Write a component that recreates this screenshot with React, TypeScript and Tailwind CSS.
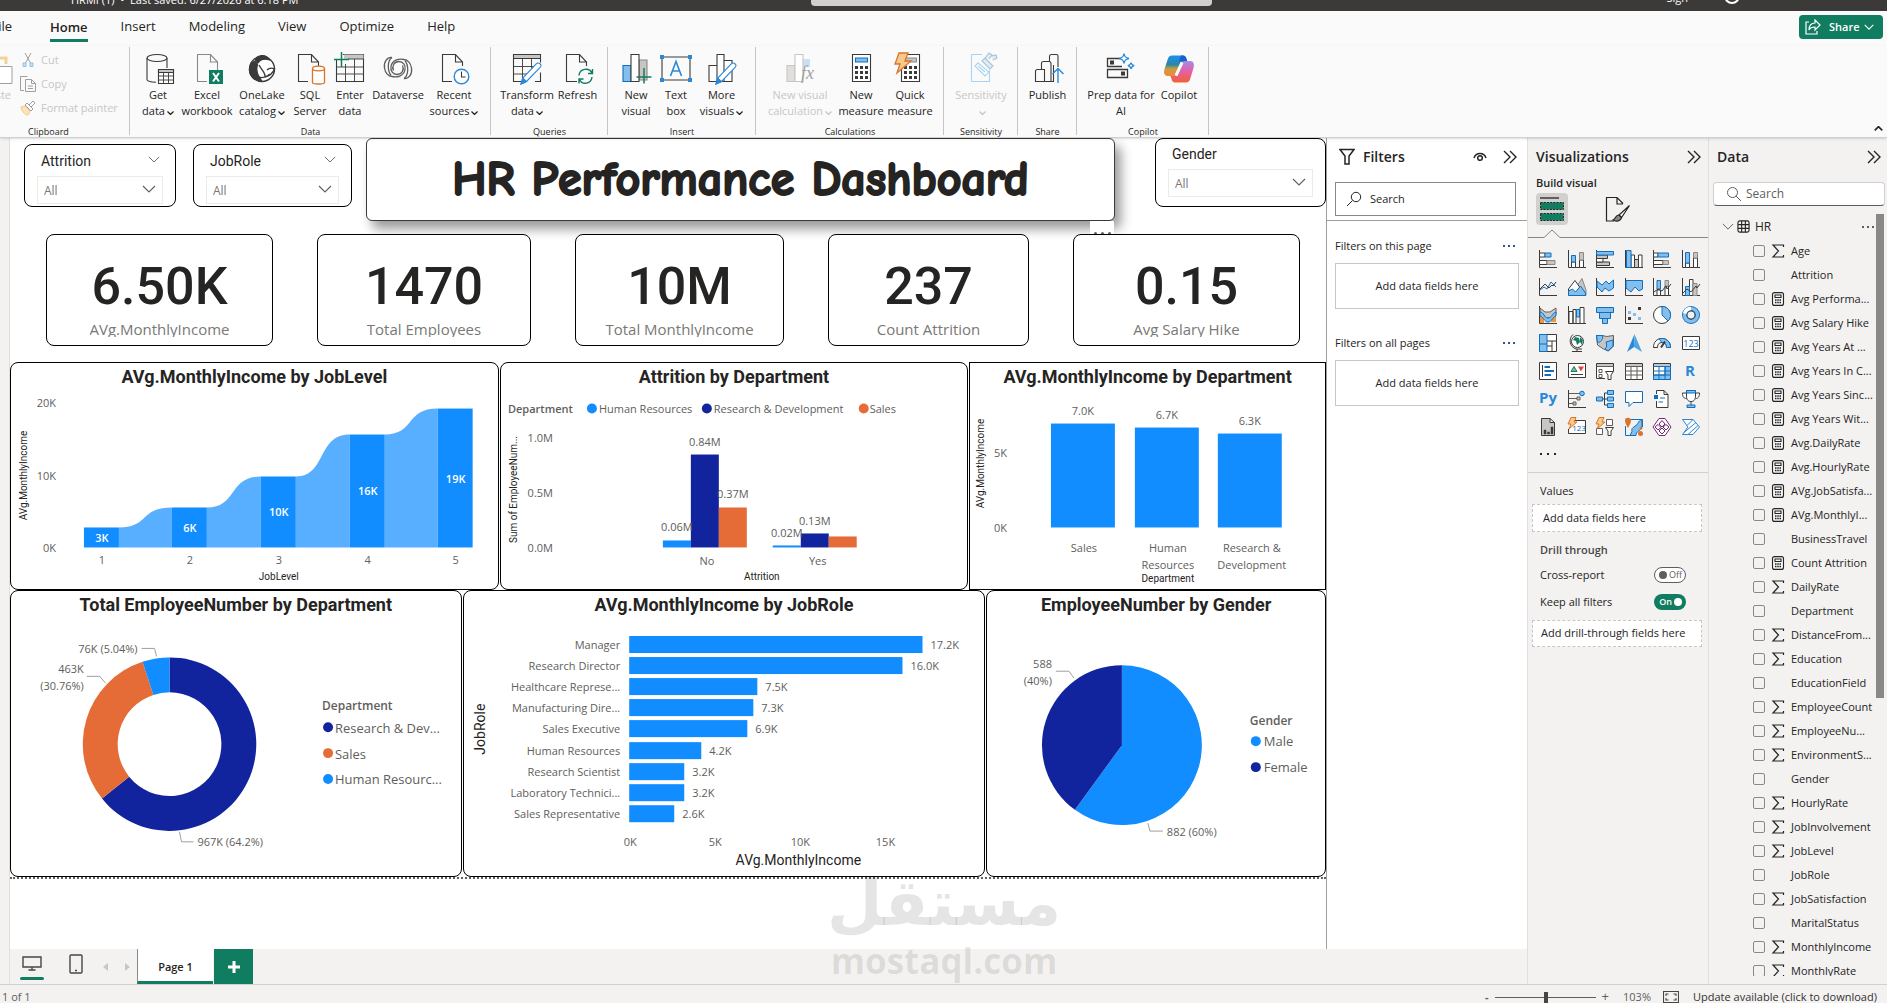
import React from "react";

const K = "#3b3a39";
const B = "#106ebe";
const L = "#83beec";
const G = "#c8c6c4";
const O = "#d9742b";

type Kids = { children?: React.ReactNode };

const Chev = ({ className = "", w = 1.1 }: { className?: string; w?: number }) => (
  <svg viewBox="0 0 14 8" className={`shrink-0 ${className}`} fill="none" stroke="currentColor" strokeWidth={w}>
    <path d="M1 1l6 6 6-6" />
  </svg>
);

const DoubleChev = () => (
  <svg viewBox="0 0 14 14" className="h-3.5 w-3.5 shrink-0 text-[#252423]" fill="none" stroke="currentColor" strokeWidth="1.400">
    <path d="M1 1l6 6-6 6M7 1l6 6-6 6" />
  </svg>
);

/* ---------- ribbon icons, 32 x 32 ---------- */

function Big({ children }: Kids) {
  return (
    <svg viewBox="0 0 32 32" className="block h-8 w-8 shrink-0 overflow-visible" fill="none" stroke={K} strokeWidth="1.1">
      {children}
    </svg>
  );
}

const Page = ({ c = K }: { c?: string }) => (
  <path d="M14 28.500H4.500V1.500h13l7 7.500v4M17.500 1.500V9h7" stroke={c} />
);

const Pencil = () => (
  <g>
    <path d="M28.500 10.500c1.500 1.300 2.200 2 .6 3.800L15.500 28.500l-5.500 2.500 1.800-6L25 11.200c1.200-1.300 2.200-1.800 3.500-.7z" fill="#fff" stroke="#2b88d8" />
    <path d="M10 31l1.800-6 3.700 3.500z" fill="#2b88d8" stroke="#2b88d8" />
  </g>
);

const Calc = ({ top = "#83beec", edge = B }: { top?: string; edge?: string }) => (
  <g>
    <path d="M7.500 1.500h18v27h-18z" fill="#fff" />
    <path d="M10.500 5h12v4h-12z" fill={top} stroke={edge} />
    <path d="M10 13h3v3h-3zM15 13h3v3h-3zM20 13h3v3h-3zM10 18h3v3h-3zM15 18h3v3h-3zM20 18h3v3h-3zM10 23h3v3h-3zM15 23h3v3h-3zM20 23h3v3h-3z" fill={K} stroke="none" />
  </g>
);

const icons: Record<string, React.ReactNode> = {
  getdata: (
    <Big>
      <ellipse cx="15" cy="5" rx="10" ry="3.500" />
      <path d="M5 5v21.500c0 1.500 3 2.500 9 2.700M25 5v10" />
      <path d="M16.500 16.500h15v14h-15z" fill="#fff" />
      <path d="M16.500 16.500h15v3h-15z" fill={G} />
      <path d="M16.500 23h15M16.500 27h15M21.500 19.500v11M26.500 19.500v11" strokeWidth="0.900" />
    </Big>
  ),
  excel: (
    <Big>
      <path d="M16 28.500H6.500V1.500h13l7 7.500v8M19.500 1.500V9h7" stroke="#8a8886" />
      <path d="M18 17h14v14H18z" fill="#107c60" stroke="none" />
      <path d="M22 20l6 8.500M28 20l-6 8.500" stroke="#fff" strokeWidth="2" />
    </Big>
  ),
  onelake: (
    <Big>
      <circle cx="16" cy="16" r="12.500" strokeWidth="1.400" fill="#fff" />
      <path d="M9 8C10 2 20 0 23.500 7c-5-1.500-9-.5-11.500 3-1.500-1.500-2.500-1.700-3-2z" fill={K} />
      <path d="M8 8.500c1.500 0 3 1.500 3.500 3-1 4-1 9 2 13 1 1.200 1.500 2 2 3C8 28.500 2.500 22 3.500 15.500 4 12 6 9.500 8 8.500z" fill={K} />
      <path d="M13 12c2.500 5 6.500 7.500 6 12M19 24c4-1 8-4 9.500-8-3-1.500-5.500-1-7.500 1M13 24c3 1.500 8 0 11-3" strokeWidth="1.400" />
    </Big>
  ),
  sql: (
    <Big>
      <Page />
      <path d="M18.500 16v13.500c0 1 3 1.500 6 1.500s6-.5 6-1.500V16z" fill="#fff" stroke={O} strokeWidth="1.300" />
      <ellipse cx="24.500" cy="15.500" rx="6" ry="2.300" fill="#fff" stroke={O} strokeWidth="1.300" />
    </Big>
  ),
  enter: (
    <Big>
      <path d="M2.500 6v22.500h27V1.500H9" />
      <path d="M10 1.500h19.500v4.500H10z" fill={G} stroke="none" />
      <path d="M2.500 14h27M2.500 21h27M11.500 11v17.500M20.500 6v22.500M14 6h15.500" strokeWidth="0.900" />
      <path d="M7.500-1v15M0 6.500h15" stroke="#107c60" strokeWidth="1.500" />
    </Big>
  ),
  dataverse: (
    <Big>
      <g strokeWidth="1.300" stroke="#605e5c">
        <path d="M10 4.500C5 4 1.500 9 2.500 15c.7 5 4 8.500 7.500 8.500 5.500 1.500 12-1 13-7 .8-4.500-2-8-6-8-5 0-7.500 5-5.500 9" />
        <path d="M10 4.500C5.500 7.500 5 17 9 22.500" />
        <path d="M22 25.500c5 .5 8.500-4.500 7.500-10.500-.7-5-4-8.500-7.500-8.500-5.500-1.500-12 1-13 7-.8 4.500 2 8 6 8 5 0 7.500-5 5.500-9" />
        <path d="M22 25.500c4.500-3 5-12.500 1-18" />
      </g>
    </Big>
  ),
  recent: (
    <Big>
      <Page />
      <circle cx="23.500" cy="23.500" r="7.300" fill="#fff" stroke="#2b88d8" strokeWidth="1.400" />
      <path d="M23.500 18.500v5.500h4" />
    </Big>
  ),
  transform: (
    <Big>
      <path d="M16 28.500H2.500V1.500h27v8M2.500 5.500h27M24 28.500h5.500v-9" />
      <path d="M3 2h26v3H3z" fill={G} stroke="none" />
      <path d="M2.500 13.500h22M2.500 21h14M11.500 5.500v23M20.500 5.500V15" strokeWidth="0.900" />
      <Pencil />
    </Big>
  ),
  refresh: (
    <Big>
      <path d="M15 28.500H4.500V1.500h13l7 7.500v4M17.500 1.500V9h7" />
      <path d="M17 22.500c.5-7 10-8.500 13-2.500M30.500 16v4.500H26M30 24c-.8 7-9.500 8.500-12.500 2.500M17 30.500V26h4.500" stroke="#107c60" strokeWidth="1.400" />
    </Big>
  ),
  newvisual: (
    <Big>
      <path d="M3 12.500h8v16H3z" fill="#83beec" stroke={B} />
      <path d="M19 7h8v20h-8z" fill={G} stroke="#8a8886" />
      <path d="M11 1.500h8v27h-8z" fill="#fff" />
      <path d="M24 15v15.500M16.500 24h15" stroke="#107c60" strokeWidth="1.500" />
    </Big>
  ),
  textbox: (
    <Big>
      <path d="M2 4h28v23H2z" />
      <path d="M0 2h4v4H0zM28 2h4v4h-4zM0 25h4v4H0zM28 25h4v4h-4z" fill="#2b88d8" stroke="none" />
      <path d="M10.500 23L16 8.500 21.500 23M12.500 18h7" stroke="#2b88d8" strokeWidth="1.600" />
    </Big>
  ),
  morevisuals: (
    <Big>
      <path d="M3 12.500h8v16H3zM11 1.500h7v27h-7zM18 7.500h8v21h-8z" fill="#fff" />
      <Pencil />
    </Big>
  ),
  viscalc: (
    <Big>
      <path d="M3 12.500h8v16H3z" fill="#e1dfdd" stroke={G} />
      <path d="M18 6h8v8h-8z" fill="#c7e0f4" stroke="none" />
      <path d="M11 1.500h8v27h-8z" fill="#fff" stroke={G} />
      <text x="17" y="26" fontFamily="Liberation Serif" fontStyle="italic" fontSize="18" fill="#a19f9d" stroke="none">fx</text>
    </Big>
  ),
  measure: (
    <Big>
      <Calc />
    </Big>
  ),
  quick: (
    <Big>
      <Calc top={G} edge="#8a8886" />
      <path d="M5 0h9l-3 8h6L3 20l3-9H1z" fill="#f8c98b" stroke={O} strokeWidth="1.300" />
    </Big>
  ),
  sensitivity: (
    <Big>
      <path d="M17 1.500H6.500v27h18V17" stroke="#a9d3f2" />
      <path d="M10 13l3-3 11 9-4 4z M13 13l7 6" stroke="#a9d3f2" fill="#fff" />
      <path d="M20 5l4-5 3 2-3 4M26 3l5-1 1 3-4 2M20 5l8 8-3 3-8-8z" stroke="#a9c3d8" fill="#dcecf8" />
    </Big>
  ),
  publish: (
    <Big>
      <path d="M3.500 28.500V18.500c0-1.500.5-2 2-2h7v12h-9zM12.500 28.500h9V12M9.500 16.500v-6c0-1.500.5-2 2-2h6M17.500 8.500v-5c0-1.500 1-2 2-2h5c1 0 1.500.5 1.500 1.500V14" />
      <path d="M17 8.500c1.500 0 2 .5 2 2V28" />
      <path d="M26 30V15.500M20.500 21l5.500-5.500 5.500 5.500" stroke="#2b88d8" strokeWidth="1.400" />
    </Big>
  ),
  prep: (
    <Big>
      <path d="M17 13.500H2.500v-8H15M2.500 16.500h20v8h-20z" strokeWidth="1.300" />
      <path d="M5 7.500h4v4H5zM16 18.500h4v4h-4z" fill={K} stroke="none" />
      <path d="M19 .500c.6 3.400 1.600 4.400 5 5-3.400.6-4.400 1.600-5 5-.6-3.400-1.600-4.400-5-5 3.400-.6 4.400-1.600 5-5z" stroke="#2b88d8" fill="#fff" strokeWidth="1.300" />
      <path d="M26 9.500c.4 2.100 1.100 2.800 3.200 3.200-2.100.4-2.800 1.100-3.200 3.200-.4-2.100-1.100-2.800-3.200-3.200 2.100-.4 2.800-1.100 3.200-3.200z" stroke="#2b88d8" fill="#fff" strokeWidth="1.300" />
    </Big>
  ),
  copilot: (
    <svg viewBox="0 0 32 32" className="block h-8 w-8 shrink-0">
      <defs>
        <linearGradient id="cpa" x1="0" y1="0" x2="0" y2="1">
          <stop offset="0" stopColor="#1d8fee" />
          <stop offset="0.450" stopColor="#2a87a8" />
          <stop offset="0.650" stopColor="#c99f3a" />
          <stop offset="1" stopColor="#f0883e" />
        </linearGradient>
        <linearGradient id="cpb" x1="0" y1="0" x2="0" y2="1">
          <stop offset="0" stopColor="#a78be8" />
          <stop offset="0.500" stopColor="#e55fa5" />
          <stop offset="1" stopColor="#f0622f" />
        </linearGradient>
      </defs>
      <path d="M9 2.500h11c2 0 3 1.500 3.500 3.500l1 3h-6l-3 10c-.8 2.500-2 4-4.500 4H4.500C1 23 .5 19 1.500 16L5 5.500c.7-2 2-3 4-3z" fill="url(#cpa)" />
      <path d="M23 29.500H12c-2 0-3-1.500-3.500-3.500l-1-3H12c2 0 3-1.500 3.500-3l3-9c.8-2 2-3 4.500-3h4.500c3.500 0 4 4 3 7L27 26.500c-.7 2-2 3-4 3z" fill="url(#cpb)" />
      <path d="M19 9.500l-6 13" stroke="#fafafa" strokeWidth="3" />
      <path d="M18 2.500h2c2 0 3 1.500 3.500 3.500l.6 2H18c-1 0-2 1-2.500 2z" fill="#1a5fd0" />
    </svg>
  ),
};

type Tool = { icon: string; lines: string[]; w: string; drop?: boolean; off?: boolean };

function ToolButton({ icon, lines, w, drop, off }: Tool) {
  return (
    <button disabled={off} className={`flex shrink-0 flex-col items-center pt-[7px] text-[11px] leading-4 whitespace-nowrap ${w} ${off ? "text-[#c8c6c4]" : "text-[#252423]"}`}>
      {icons[icon]}
      <span className="mt-0.5">{lines[0]}</span>
      <span className="flex h-4 items-center">
        {lines[1]}
        {drop && <Chev w={2.6} className="mt-1 ml-0.5 h-1 w-[7px]" />}
      </span>
    </button>
  );
}

function Group({ label, w, tools, pad }: { label: string; w: string; tools: Tool[]; pad: string }) {
  return (
    <section className={`relative flex shrink-0 flex-col ${w}`}>
      <div className={`flex h-20 ${pad}`}>
        {tools.map((t) => (
          <ToolButton key={t.icon} {...t} />
        ))}
      </div>
      <div className="text-center text-[9px] leading-[11px] text-[#252423]">{label}</div>
      <span className="absolute top-px right-0 bottom-0.5 w-px bg-[#c8c6c4]" />
    </section>
  );
}

function Ribbon() {
  return (
    <div className="z-20 flex h-[92px] shrink-0 overflow-hidden border-b border-[#d2d0ce] bg-[#fafafa] shadow-sm">
      <section className="relative flex w-[130px] shrink-0 flex-col">
        <div className="flex h-20">
          <button disabled className="flex w-[13px] shrink-0 flex-col items-end overflow-hidden pt-[7px] text-[11px] leading-4 text-[#c8c6c4]">
            <svg viewBox="0 0 32 32" className="block h-8 w-8 shrink-0" fill="none">
              <path d="M12 5h13v6" stroke="#f3d19b" strokeWidth="3" />
              <path d="M12 13.500h19v17H12z" stroke="#a19f9d" fill="#fff" />
            </svg>
            <span className="mt-0.5 pr-0.5">Paste</span>
          </button>
          <div className="flex flex-col pt-0.5 pl-[7px] text-[11px] text-[#c8c6c4]">
            <button disabled className="flex h-6 items-center gap-[5px]">
              <svg viewBox="0 0 16 16" className="h-4 w-4" fill="none" stroke="#a19f9d">
                <path d="M5 1l5.500 10M11 1L5.500 11" />
                <path d="M3 11h3v3.500H3zM10 11h3v3.500h-3z" fill="#c7e0f4" stroke="#8fc3ee" />
              </svg>
              Cut
            </button>
            <button disabled className="flex h-6 items-center gap-[5px]">
              <svg viewBox="0 0 16 16" className="h-4 w-4" fill="none" stroke="#a19f9d">
                <path d="M4 14.500H.500V.500h7M5.500 3.500h6l4 4v8h-10zM11.500 3.500v4h4M8 10h5M8 12.500h5" />
              </svg>
              Copy
            </button>
            <button disabled className="flex h-6 items-center gap-[5px]">
              <svg viewBox="0 0 16 16" className="h-4 w-4" fill="none" stroke="#a19f9d">
                <path d="M1 7l4-1 5 5-2 4c-3 0-6-3-7-8z" fill="#fbe3bd" stroke="#f3c987" />
                <path d="M5 5l2-2 6 6-2 2zM9 5l4-4 2 2-4 4" fill="#fff" />
              </svg>
              Format painter
            </button>
          </div>
        </div>
        <div className="pl-7 text-[9px] leading-[11px] text-[#252423]">Clipboard</div>
        <span className="absolute top-px right-0 bottom-0.5 w-px bg-[#c8c6c4]" />
      </section>
      <Group
        label="Data"
        w="w-[361px]"
        pad="pl-[3px]"
        tools={[
          { icon: "getdata", lines: ["Get", "data"], w: "w-[50px]", drop: true },
          { icon: "excel", lines: ["Excel", "workbook"], w: "w-12" },
          { icon: "onelake", lines: ["OneLake", "catalog"], w: "w-[62px]", drop: true },
          { icon: "sql", lines: ["SQL", "Server"], w: "w-[34px]" },
          { icon: "enter", lines: ["Enter", "data"], w: "w-[46px]" },
          { icon: "dataverse", lines: ["Dataverse"], w: "w-[50px]" },
          { icon: "recent", lines: ["Recent", "sources"], w: "w-[62px]", drop: true },
        ]}
      />
      <Group
        label="Queries"
        w="w-[117px]"
        pad="pl-2"
        tools={[
          { icon: "transform", lines: ["Transform", "data"], w: "w-14", drop: true },
          { icon: "refresh", lines: ["Refresh"], w: "w-[45px]" },
        ]}
      />
      <Group
        label="Insert"
        w="w-[148px]"
        pad="pl-1.5"
        tools={[
          { icon: "newvisual", lines: ["New", "visual"], w: "w-11" },
          { icon: "textbox", lines: ["Text", "box"], w: "w-9" },
          { icon: "morevisuals", lines: ["More", "visuals"], w: "w-[55px]", drop: true },
        ]}
      />
      <Group
        label="Calculations"
        w="w-[188px]"
        pad="pl-1"
        tools={[
          { icon: "viscalc", lines: ["New visual", "calculation"], w: "w-20", drop: true, off: true },
          { icon: "measure", lines: ["New", "measure"], w: "w-[42px]" },
          { icon: "quick", lines: ["Quick", "measure"], w: "w-14" },
        ]}
      />
      <Group label="Sensitivity" w="w-[74px]" pad="justify-center" tools={[{ icon: "sensitivity", lines: ["Sensitivity", ""], w: "w-16", drop: true, off: true }]} />
      <Group label="Share" w="w-[59px]" pad="justify-center" tools={[{ icon: "publish", lines: ["Publish"], w: "w-12" }]} />
      <Group
        label="Copilot"
        w="w-[132px]"
        pad="pl-2"
        tools={[
          { icon: "prep", lines: ["Prep data for", "AI"], w: "w-[72px]" },
          { icon: "copilot", lines: ["Copilot"], w: "w-11" },
        ]}
      />
      <button aria-label="Collapse ribbon" className="mt-auto mr-1 mb-1.5 ml-auto text-[#252423]">
        <Chev w={2.6} className="h-[5px] w-[9px] rotate-180" />
      </button>
    </div>
  );
}

/* ---------- report visuals ---------- */

const DIN = "font-['Roboto',sans-serif]";

function Slicer({ title, w, top, body }: { title: string; w: string; top: string; body: string }) {
  return (
    <section className={`shrink-0 rounded-lg border border-black bg-white ${w} ${top}`}>
      <div className={body}>
        <label htmlFor={title} className={`flex h-4 items-center justify-between pl-1 text-[14px] text-[#252423] ${DIN}`}>
          {title}
          {title !== "Gender" && <Chev className="mr-[3px] mb-1 h-[7px] w-3 text-[#605e5c]" />}
        </label>
        <div className="relative mt-[7px] h-7 border border-[#edebe9]">
          <select id={title} className="h-full w-full appearance-none bg-transparent pl-1.5 text-[12px] text-[#7a7876]">
            <option>All</option>
          </select>
          <Chev className="pointer-events-none absolute top-2 right-1.5 h-2 w-3.5 text-[#605e5c]" />
        </div>
      </div>
    </section>
  );
}

function Kpi({ value, label }: { value: string; label: string }) {
  return (
    <section className="flex h-28 flex-col items-center rounded-lg border border-black bg-white pt-6 text-center">
      <div className={`h-14 text-[52px] leading-14 font-medium text-[#252423] ${DIN}`}>{value}</div>
      <div className="mt-1 h-[18px] overflow-hidden text-[15px] leading-5 text-[#7a7876]">{label}</div>
    </section>
  );
}

function Visual({ title, box, round = "rounded-lg", children }: { title: string; box: string; round?: string } & Kids) {
  return (
    <section className={`flex min-w-0 flex-col border border-black bg-white ${round}`}>
      <h2 className={`mt-0.5 h-6 shrink-0 truncate text-center text-[18px] leading-6 font-bold text-[#252423] ${DIN}`}>{title}</h2>
      <svg viewBox={box} className="block min-h-0 w-full flex-1" fontSize="11" fill="#605e5c" role="img" aria-label={title}>
        {children}
      </svg>
    </section>
  );
}

type TP = { x: number; y: number; a?: "start" | "middle" | "end"; s?: number; c?: string; b?: boolean; din?: boolean; up?: boolean } & Kids;

function T({ x, y, a = "middle", s = 11, c = "#605e5c", b, din, up, children }: TP) {
  return (
    <text
      x={x}
      y={y}
      textAnchor={a}
      dominantBaseline="central"
      fontSize={s}
      fill={c}
      fontWeight={b ? 600 : 400}
      fontFamily={din ? "Roboto, sans-serif" : undefined}
      transform={up ? `rotate(-90 ${x} ${y})` : undefined}
    >
      {children}
    </text>
  );
}

const BL = "#118dff";
const NV = "#12239e";
const OR = "#e66c37";

function RibbonChart() {
  const bars = [
    [84, 527, "3K"],
    [172, 507, "6K"],
    [261, 476, "10K"],
    [350, 434, "16K"],
    [438, 408, "19K"],
  ] as [number, number, string][];
  return (
    <Visual title="AVg.MonthlyIncome by JobLevel" box="11 389 487 199">
      {bars.slice(1).map(([x, y], i) => {
        const x0 = bars[i][0] + 35;
        const y0 = bars[i][1];
        const m = (x0 + x) / 2;
        return <path key={x} d={`M${x0} ${y0}C${m + 4} ${y0} ${m - 6} ${y} ${x} ${y}V547H${x0}z`} fill="#59afff" />;
      })}
      {bars.map(([x, y, t], i) => (
        <g key={x}>
          <rect x={x} y={y} width="35" height={547 - y} fill={BL} />
          <T x={x + 18} y={(y + 547) / 2} c="#fff" b>{t}</T>
          <T x={x + 18} y={559}>{i + 1}</T>
        </g>
      ))}
      <T x={56} y={402} a="end">20K</T>
      <T x={56} y={475} a="end">10K</T>
      <T x={56} y={547} a="end">0K</T>
      <T x={279} y={576} s={10} c="#252423" din>JobLevel</T>
      <T x={24} y={475} s={10} c="#252423" din up>AVg.MonthlyIncome</T>
    </Visual>
  );
}

function AttritionChart() {
  const bars = [
    [663, 540, BL], [691, 454, NV], [719, 507, OR],
    [773, 545, BL], [801, 533, NV], [829, 536, OR],
  ] as [number, number, string][];
  return (
    <Visual title="Attrition by Department" box="501 389 467 199">
      <T x={508} y={408} a="start" b>Department</T>
      <circle cx="592" cy="408" r="5" fill={BL} />
      <T x={599} y={408} a="start">Human Resources</T>
      <circle cx="707" cy="408" r="5" fill={NV} />
      <T x={714} y={408} a="start">Research &amp; Development</T>
      <circle cx="864" cy="408" r="5" fill={OR} />
      <T x={870} y={408} a="start">Sales</T>
      {bars.map(([x, y, c]) => (
        <rect key={x} x={x} y={y} width="28" height={547 - y} fill={c} />
      ))}
      <T x={553} y={437} a="end">1.0M</T>
      <T x={553} y={492} a="end">0.5M</T>
      <T x={553} y={547} a="end">0.0M</T>
      <T x={677} y={526}>0.06M</T>
      <T x={705} y={441}>0.84M</T>
      <T x={733} y={493}>0.37M</T>
      <T x={787} y={532}>0.02M</T>
      <T x={815} y={520}>0.13M</T>
      <T x={707} y={560}>No</T>
      <T x={818} y={560}>Yes</T>
      <T x={762} y={576} s={10} c="#252423" din>Attrition</T>
      <T x={514} y={489} s={10} c="#252423" din up>Sum of EmployeeNum...</T>
    </Visual>
  );
}

function DepartmentChart() {
  const bars = [
    [1051, 423, "7.0K"],
    [1135, 427, "6.7K"],
    [1218, 433, "6.3K"],
  ] as [number, number, string][];
  return (
    <Visual title="AVg.MonthlyIncome by Department" box="970 389 355 199" round="">
      {bars.map(([x, y, t]) => (
        <g key={x}>
          <rect x={x} y={y} width="64" height={527 - y} fill={BL} />
          <T x={x + 32} y={y - 13}>{t}</T>
        </g>
      ))}
      <T x={1007} y={452} a="end">5K</T>
      <T x={1007} y={527} a="end">0K</T>
      <T x={1084} y={547}>Sales</T>
      <T x={1168} y={547}>Human</T>
      <T x={1168} y={564}>Resources</T>
      <T x={1252} y={547}>Research &amp;</T>
      <T x={1252} y={564}>Development</T>
      <T x={1168} y={578} s={10} c="#252423" din>Department</T>
      <T x={981} y={463} s={10} c="#252423" din up>AVg.MonthlyIncome</T>
    </Visual>
  );
}

function slice(cx: number, cy: number, r: number, q: number, from: number, to: number) {
  const p = (rad: number, t: number) => `${cx + rad * Math.sin(t * 2 * Math.PI)} ${cy - rad * Math.cos(t * 2 * Math.PI)}`;
  const big = to - from > 0.5 ? 1 : 0;
  return `M${p(r, from)}A${r} ${r} 0 ${big} 1 ${p(r, to)}L${p(q, to)}A${q} ${q} 0 ${big} 0 ${p(q, from)}z`;
}

function DonutChart() {
  return (
    <Visual title="Total EmployeeNumber by Department" box="11 617 451 259">
      <path d={slice(170, 744, 87, 52, 0, 0.642)} fill={NV} />
      <path d={slice(170, 744, 87, 52, 0.642, 0.9496)} fill={OR} />
      <path d={slice(170, 744, 87, 52, 0.9496, 1)} fill={BL} />
      <path d="M142 648h13l2 8M87 676h13l6 7M180 832l2 10h12" fill="none" stroke="#a19f9d" />
      <T x={138} y={648} a="end">76K (5.04%)</T>
      <T x={84} y={668} a="end">463K</T>
      <T x={84} y={685} a="end">(30.76%)</T>
      <T x={198} y={842} a="start">967K (64.2%)</T>
      <T x={323} y={705} a="start" s={12} b>Department</T>
      <circle cx="329" cy="727" r="5" fill={NV} />
      <T x={336} y={728} a="start" s={13}>Research &amp; Dev...</T>
      <circle cx="329" cy="753" r="5" fill={OR} />
      <T x={336} y={754} a="start" s={13}>Sales</T>
      <circle cx="329" cy="779" r="5" fill={BL} />
      <T x={336} y={779} a="start" s={13}>Human Resourc...</T>
    </Visual>
  );
}

function JobRoleChart() {
  const rows = [
    ["Manager", 293, "17.2K"],
    ["Research Director", 273, "16.0K"],
    ["Healthcare Represe...", 128, "7.5K"],
    ["Manufacturing Dire...", 124, "7.3K"],
    ["Sales Executive", 118, "6.9K"],
    ["Human Resources", 72, "4.2K"],
    ["Research Scientist", 55, "3.2K"],
    ["Laboratory Technici...", 55, "3.2K"],
    ["Sales Representative", 45, "2.6K"],
  ] as [string, number, string][];
  return (
    <Visual title="AVg.MonthlyIncome by JobRole" box="464 617 520 259">
      {rows.map(([name, w, t], i) => {
        const y = 644 + Math.round(i * 21.1);
        return (
          <g key={name}>
            <T x={620} y={y} a="end">{name}</T>
            <rect x={629} y={y - 8} width={w} height="17" fill={BL} />
            <T x={637 + w} y={y} a="start">{t}</T>
          </g>
        );
      })}
      <T x={630} y={841}>0K</T>
      <T x={715} y={841}>5K</T>
      <T x={800} y={841}>10K</T>
      <T x={885} y={841}>15K</T>
      <T x={798} y={860} s={14} c="#252423" din>AVg.MonthlyIncome</T>
      <T x={480} y={729} s={14} c="#252423" din up>JobRole</T>
    </Visual>
  );
}

function GenderChart() {
  return (
    <Visual title="EmployeeNumber by Gender" box="987 617 338 259">
      <path d={slice(1122, 745, 80, 0, 0, 0.6)} fill={BL} />
      <path d={slice(1122, 745, 80, 0, 0.6, 1)} fill={NV} />
      <path d="M1056 671h13l5 7M1148 823l2 8h13" fill="none" stroke="#a19f9d" />
      <T x={1052} y={663} a="end">588</T>
      <T x={1052} y={680} a="end">(40%)</T>
      <T x={1167} y={831} a="start">882 (60%)</T>
      <T x={1250} y={720} a="start" s={12} b>Gender</T>
      <circle cx="1256" cy="741" r="5" fill={BL} />
      <T x={1264} y={741} a="start" s={13}>Male</T>
      <circle cx="1256" cy="767" r="5" fill={NV} />
      <T x={1264} y={767} a="start" s={13}>Female</T>
    </Visual>
  );
}

function Report() {
  return (
    <main className="min-w-0 flex-1 bg-white">
      <div className="border-b-2 border-dotted border-[#605e5c]">
        <div className="flex items-start">
          <Slicer title="Attrition" w="ml-3.5 w-[152px]" top="mt-1.5 h-[63px]" body="mx-3 mt-2" />
          <Slicer title="JobRole" w="ml-[17px] w-[159px]" top="mt-1.5 h-[63px]" body="mx-3 mt-2" />
          <div className="relative ml-3.5 flex h-[83px] flex-1 items-center justify-center rounded-md border border-[#3b3a39] bg-white shadow-[6px_8px_12px_rgba(0,0,0,0.400)]">
            <h1 className="text-[48px] leading-none font-bold whitespace-nowrap text-[#252423] [font-family:'Comic_Sans_MS','Comic_Neue','Open_Sans',sans-serif] [-webkit-text-stroke:2px_#252423]">HR Performance Dashboard</h1>
            <button aria-label="More options" className="absolute top-[82px] right-0 flex h-3.5 w-6 items-end justify-center gap-1 bg-white">
              <i className="h-[3px] w-[3px] rounded-full bg-[#605e5c]" />
              <i className="h-[3px] w-[3px] rounded-full bg-[#605e5c]" />
              <i className="h-[3px] w-[3px] rounded-full bg-[#605e5c]" />
            </button>
          </div>
          <Slicer title="Gender" w="ml-10 w-[171px]" top="h-[69px]" body="mr-3 ml-3 mt-[7px]" />
        </div>
        <div className="relative mt-[13px] mr-[26px] ml-9 grid grid-cols-[227fr_214fr_209fr_201fr_227fr] gap-x-11">
          <Kpi value="6.50K" label="AVg.MonthlyIncome" />
          <Kpi value="1470" label="Total Employees" />
          <Kpi value="10M" label="Total MonthlyIncome" />
          <Kpi value="237" label="Count Attrition" />
          <Kpi value="0.15" label="Avg Salary Hike" />
        </div>
        <div className="mt-4 grid h-[228px] grid-cols-[489fr_469fr_357fr] gap-x-px">
          <RibbonChart />
          <AttritionChart />
          <DepartmentChart />
        </div>
        <div className="grid h-[287px] grid-cols-[452fr_523fr_340fr] gap-x-px">
          <DonutChart />
          <JobRoleChart />
          <GenderChart />
        </div>
      </div>
    </main>
  );
}

/* ---------- side panes ---------- */

const Dots = ({ c = "text-[#605e5c]" }: { c?: string }) => (
  <svg viewBox="0 0 12 4" className={`h-1 w-3 ${c}`} fill="currentColor">
    <path d="M0 1h2v2H0zM5 1h2v2H5zM10 1h2v2h-2z" />
  </svg>
);

function PaneTitle({ children }: Kids) {
  return <h2 className="text-[14px] leading-5 font-semibold text-[#252423]">{children}</h2>;
}

function FilterWell({ label }: { label: string }) {
  return (
    <section className="mb-[25px] pl-2">
      <div className="flex h-[18px] items-center justify-between pr-3 text-[11px] text-[#252423]">
        {label}
        <button aria-label={`${label} options`}>
          <Dots c="text-[#2b579a]" />
        </button>
      </div>
      <div className="mt-2 mr-2 flex h-[46px] items-center justify-center border border-[#c8c6c4] text-[11px] text-[#252423]">Add data fields here</div>
    </section>
  );
}

function Filters() {
  return (
    <aside className="w-[201px] shrink-0 border-l border-[#a19f9d] bg-white">
      <header className="flex h-[38px] items-center pr-2.5 pl-3">
        <svg viewBox="0 0 16 18" className="h-[18px] w-4" fill="none" stroke="#252423" strokeWidth="1.500">
          <path d="M1 1.500h14L10 8v8H6V8z" />
        </svg>
        <div className="ml-2 flex-1">
          <PaneTitle>Filters</PaneTitle>
        </div>
        <svg viewBox="0 0 14 10" className="mr-4 h-2.5 w-3.5" fill="none" stroke="#252423" strokeWidth="1.500">
          <path d="M1 6C3 0 11 0 13 6" />
          <circle cx="7" cy="6" r="2.300" />
        </svg>
        <DoubleChev />
      </header>
      <div className="border-b border-[#a19f9d] pt-1.5 pb-1 pl-2">
        <div className="mr-[11px] flex h-[34px] items-center border border-[#8a8886] pl-2.5">
          <svg viewBox="0 0 16 16" className="h-4 w-4" fill="none" stroke="#252423">
            <circle cx="10" cy="6" r="4.700" />
            <path d="M6.500 9.500L1 15" />
          </svg>
          <input aria-label="Search filters" placeholder="Search" className="ml-2 w-28 bg-transparent text-[11px] outline-none placeholder:text-[#252423]" />
        </div>
      </div>
      <div className="pt-4">
        <FilterWell label="Filters on this page" />
        <FilterWell label="Filters on all pages" />
      </div>
    </aside>
  );
}

const ax = <path d="M.500 0v17.500H18" stroke={K} />;
const funnel = <path d="M9.500 9.500h8L15 13v4.500h-3V13z" fill="#fff" stroke={K} />;
const bolt = <path d="M3-.5h5L6 4h3L1 11l2-5H0z" fill="#f8c98b" stroke={O} />;

const vizIcons: [string, React.ReactNode][] = [
  ["Stacked bar chart", <g>{ax}<path d="M.500 3H6v4H.500zM.500 10.500H8v4H.500z" fill="#fff" stroke={K} /><path d="M6 3h6v4H6z" fill={L} stroke={B} /><path d="M8 10.500h8v4H8z" fill={G} stroke="#8a8886" /></g>],
  ["Stacked column chart", <g>{ax}<path d="M3.500 12h4v5.500h-4zM11.500 10h4v7.500h-4z" fill="#fff" stroke={K} /><path d="M3.500 5.500h4V12h-4z" fill={L} stroke={B} /><path d="M11.500 2.500h4V10h-4z" fill={G} stroke="#8a8886" /></g>],
  ["Clustered bar chart", <g>{ax}<path d="M.500 5h11v3.500H.500zM.500 12h13v3.500H.500z" fill={G} stroke={K} /><path d="M.500 8.500H7V12H.500z" fill="#fff" stroke={K} /><path d="M.500 1.500h17V5H.500z" fill={L} stroke={B} /></g>],
  ["Clustered column chart", <g>{ax}<path d="M6 5h3.500v12.500H6zM13.500 5H17v12.500h-3.500z" fill="#fff" stroke={K} /><path d="M9.500 9.500h4v8h-4z" fill={G} stroke={K} /><path d="M1.500.500H6v17H1.500z" fill={L} stroke={B} /></g>],
  ["100% stacked bar chart", <g>{ax}<path d="M.500 3H5v4H.500zM.500 10.500H10v4H.500z" fill="#fff" stroke={K} /><path d="M5 3h10.500v4H5z" fill={L} stroke={B} /><path d="M10 10.500h5.500v4H10z" fill={G} stroke="#8a8886" /></g>],
  ["100% stacked column chart", <g>{ax}<path d="M3.500 13h4v4.500h-4zM11.500 8h4v9.500h-4z" fill="#fff" stroke={K} /><path d="M3.500 2.500h4V13h-4z" fill={L} stroke={B} /><path d="M11.500 2.500h4V8h-4z" fill={G} stroke="#8a8886" /></g>],
  ["Line chart", <g>{ax}<path d="M1 12l4-3 3 2 4-7 5 5" stroke={B} /><path d="M1 11l5-5 4 4 3-3 1 1 3-4" stroke={K} /></g>],
  ["Area chart", <g><path d="M9 8l5-7.500L18 12v5.500H9z" fill={G} stroke="#8a8886" /><path d="M.500 11L7 2.500l6 8.500v6H.500z" fill="#fff" stroke={K} /><path d="M.500 17.500V13l4-2 3 3 5-6 5 7v2.500z" fill={L} stroke={B} /></g>],
  ["Stacked area chart", <g>{ax}<path d="M1 3l5 4 4-4 3 3 4.500-4v8L13 13l-4-3-3 4-5-5z" fill={L} stroke={B} /></g>],
  ["100% stacked area chart", <g>{ax}<path d="M1 2.500h16.500V11L14 13l-4-4-4 5-5-4z" fill={L} stroke={B} /></g>],
  ["Line and stacked column chart", <g>{ax}<path d="M4 12h3.500v5.500H4zM12 8h3.500v9.500H12z" fill="#fff" stroke={K} /><path d="M4 2.500h3.500V11H4z" fill={L} stroke={B} /><path d="M12 2.500h3.500V8H12z" fill={G} stroke="#8a8886" /><path d="M1 14l4-3 4 2 4-5 1 3 4-5" stroke={K} /></g>],
  ["Line and clustered column chart", <g>{ax}<path d="M7.500 1.500H11v16H7.500z" fill="#fff" stroke={K} /><path d="M3.500 8.500h4v9h-4z" fill={L} stroke={B} /><path d="M11 5.500h4v12h-4z" fill={G} stroke="#8a8886" /><path d="M1 15l4-4 4 3 5-6 1 2 3-4" stroke={K} /></g>],
  ["Ribbon chart", <g>{ax}<path d="M1 9l4 1v7H1zM12 12l5-4v8h-5z" fill="#f0953f" stroke="none" /><path d="M1 2l5 4h5l6-4v6l-6 4H6L1 7z" fill={G} stroke="#605e5c" /><path d="M1 6c4 0 4 6 8 6s4-5 8-6v4c-4 1-4 6-8 6S5 11 1 10z" fill={L} stroke={B} /></g>],
  ["Waterfall chart", <g>{ax}<path d="M1 5.500h4v12H1zM12 1.500h4v16h-4zM5 3.500h3v14H5z" fill="#fff" stroke={K} /><path d="M8.500 3.500h3V11h-3z" fill={L} stroke={B} /></g>],
  ["Funnel chart", <path d="M.500 1.500h17v5H.500zM3.500 6.500h11v6h-11zM6.500 12.500h5v5h-5z" fill={L} stroke={B} />],
  ["Scatter chart", <g>{ax}<path d="M13 1h3v3h-3zM3 11h3v3H3z" fill={K} stroke="none" /><path d="M3 5h3v3H3zM8 7h3v3H8zM13 11h3v3h-3z" fill={L} stroke="none" /></g>],
  ["Pie chart", <g><circle cx="9" cy="9" r="8.500" fill="#fff" stroke={K} /><path d="M9 .500V9l6 6A8.500 8.500 0 0 0 9 .500z" fill={L} stroke={B} /></g>],
  ["Donut chart", <g><circle cx="9" cy="9" r="6.500" stroke={B} strokeWidth="5" /><circle cx="9" cy="9" r="6.500" stroke={L} strokeWidth="3.200" /><path d="M2.700 7.500A6.500 6.500 0 0 1 9 2.500" stroke="#fff" strokeWidth="3.500" /><circle cx="9" cy="9" r="4" stroke={K} strokeWidth="0.800" /></g>],
  ["Treemap", <g><path d="M.500.500h17v17H.500z" fill="#fff" stroke={K} /><path d="M.500.500H8v17H.500z" fill={L} stroke={B} /><path d="M.500 10H8" stroke={B} /><path d="M8 7h9.500M13 7v10.500M8 12h5" stroke={K} /></g>],
  ["Map", <g><circle cx="9.500" cy="7.500" r="6" fill="#fff" stroke={K} /><path d="M7 3l4 1 1 4-3 3-1-4-3-1zM12 3l3 3-1 5-2-3z" fill="#107c60" stroke="none" /><path d="M5 .500C0 5 2 13 8 15h6M9 15v2.500M4 17.500h10" stroke={K} /></g>],
  ["Filled map", <g><path d="M.500 1.500h6l4 1 7-1V12l-5 5-5-2-6-4z" fill={G} stroke="#605e5c" /><path d="M.500 1.500h6c1 4-2 7-5 7zM10 8l7-2v6l-5 5-3-2c2-2 2-4 1-7z" fill={L} stroke={B} /></g>],
  ["Azure map", <g><path d="M9.500 0L2 18l7-5z" fill="#2b88d8" stroke="none" /><path d="M9.500 0L17 18l-8-5z" fill="#4ea5e6" stroke="none" /></g>],
  ["Gauge", <g><path d="M.500 13.500C.500 8 4 4.500 9 4.500s8.500 3.500 8.500 9h-4C13.500 10 12 8.500 9 8.500S4.500 10 4.500 13.500z" fill="#fff" stroke={K} /><path d="M6 5c6-2 11.500 2 11.500 8.500h-4C13.500 10 12 8.500 9 8.500z" fill={L} stroke={B} /><path d="M8 13.500l4-6" stroke={K} strokeWidth="2" /></g>],
  ["Card", <g><path d="M.500 2.500h17v13H.500z" fill="#fff" stroke={K} /><text x="9" y="12.500" textAnchor="middle" fontSize="9" fill={B} stroke="none">123</text></g>],
  ["Multi-row card", <g><path d="M.500.500h17v17H.500z" fill="#fff" stroke={K} /><path d="M3.500 3v12" stroke={K} /><path d="M5.500 5H11M5.500 9H15M5.500 13H12" stroke={B} strokeWidth="2" /></g>],
  ["KPI", <g><path d="M.500 1.500h17v14H.500z" fill="#fff" stroke={K} /><path d="M3 9.500l3-5 3 5z" fill="#7fb7a5" stroke="#107c60" /><path d="M10 4.500h6l-3 5z" fill="#e8413b" stroke="none" /><path d="M3 12.500h12" stroke={K} /></g>],
  ["Slicer", <g><path d="M9 16.500H.500v-15h17V9" fill="#fff" stroke={K} /><path d="M1 2h16v2.500H1z" fill={G} stroke="none" /><path d="M.500 4.500h17M3 7.500h3v3H3zM3 12.500h3v3H3z" stroke="#605e5c" />{funnel}</g>],
  ["Table", <g><path d="M.500 1.500h17v16H.500z" fill="#fff" stroke={K} /><path d="M1 2h16v2.500H1z" fill={G} stroke="none" /><path d="M.500 4.500h17M.500 9h17M.500 13h17M6 4.500v13M12 4.500v13" stroke="#605e5c" /></g>],
  ["Matrix", <g><path d="M.500 1.500h17v16H.500z" fill="#fff" stroke={K} /><path d="M1 2h16v2.500H1z" fill={G} stroke="none" /><path d="M12 4.500h5.500v13H.500V13H12z" fill={L} stroke={B} /><path d="M.500 4.500h17M.500 9h17M.500 13h17M6 4.500v13M12 4.500v13" stroke={B} /></g>],
  ["R script visual", <text x="8" y="14" textAnchor="middle" fontSize="15" fontWeight="700" fill="#2b88d8" stroke="none">R</text>],
  ["Python visual", <text x="9" y="13" textAnchor="middle" fontSize="15" fontWeight="700" fill="#2b88d8" stroke="none">Py</text>],
  ["Key influencers", <g>{ax}<path d="M1 3.500h11M1 8.500h8M1 13.500h4" stroke="#605e5c" /><circle cx="14" cy="3.500" r="2.300" fill={L} stroke={B} /><path d="M9 7h3v3H9zM5 12h3v3H5z" fill={G} stroke="#605e5c" /></g>],
  ["Decomposition tree", <g><path d="M6 9h5M8.500 3v12M8.500 3H12M8.500 15H12" stroke={K} /><path d="M.500 7h6v4h-6zM11.500.500h6v4h-6zM11.500 7h6v4h-6zM11.500 13.500h6v4h-6z" fill={L} stroke={B} /></g>],
  ["Q&A", <path d="M.500 1.500h17v11H8L4 16.500v-4H.500z" fill="#fff" stroke={B} />],
  ["Narrative", <g><path d="M3.500 4V.500H11l4 4v13H3.500V11M11 .500v4h4" fill="#fff" stroke={K} /><path d="M1 5h4v4H1z" fill={B} stroke="none" /><path d="M7 8h5M5.500 12H10" stroke={B} /></g>],
  ["Metrics", <g><path d="M4.500.500h9V6c0 4-2 5.500-4.500 5.500S4.500 10 4.500 6zM4.500 3h-4c0 4 1.500 5.500 4 5.500M13.500 3h4c0 4-1.500 5.500-4 5.500M9 11.500V15" fill="#fff" stroke={K} /><path d="M4.500.500h9V3h-9zM5 15h8v2.500H5z" fill={L} stroke={B} /></g>],
  ["Paginated report", <g><path d="M2.500.500H11l4.500 4v13h-13zM11 .500v4h4.500" fill={G} stroke={K} /><path d="M5 12h2v4H5zM8.500 14h2v2h-2zM12 9h2v7h-2z" fill={K} stroke={K} strokeWidth="0.500" /></g>],
  ["New card", <g><path d="M6 2.500h11.500v13H.500V11" fill="#fff" stroke={K} /><text x="11" y="12.500" textAnchor="middle" fontSize="8" fill={B} stroke="none">123</text>{bolt}</g>],
  ["New slicer", <g><path d="M10.500 1.500h6v6h-6zM.500 10.500h6v6h-6z" fill="#fff" stroke="#605e5c" />{bolt}{funnel}</g>],
  ["ArcGIS map", <g><path d="M6 1.500h11.500V9M11 17.500H.500V8" fill="none" stroke={B} /><path d="M17 1.500c-5 2-3 4-6 6s-5 3-4 6l-2 4h6c0-5 5-4 6-9z" fill={L} stroke={B} /><path d="M0 2c0-3 6-3 6 0 0 3-1 4-3 8C1 6 0 5 0 2z" fill={O} stroke="none" /><circle cx="16" cy="10" r="1.500" fill={O} stroke="none" /><circle cx="15.500" cy="15.500" r="2.500" fill={O} stroke="none" /></g>],
  ["Power Apps", <g stroke="#742774"><path d="M6 .500h6L18 9l-6 8.500H6L0 9z" fill="#fff" /><path d="M9 2.500L12 6 9 9 6 6zM5 6.500L8 9.500 5 12 2 9zM13 6.500L16 9l-3 3-3-3zM9 10l3 3-3 3-3-3z" fill="none" /></g>],
  ["Power Automate", <g stroke="#2b88d8" fill="#fff"><path d="M.500 1.500H11L17.500 9 11 16.500H.500L6 9z" /><path d="M5 7.500l6-6M2 14.500L14 4.500M6 16.500l10-9" /></g>],
];

function Visualizations() {
  return (
    <aside className="flex w-[181px] shrink-0 flex-col border-l border-[#e1dfdd]">
      <header className="flex h-[38px] items-center justify-between pr-[7px] pl-2">
        <PaneTitle>Visualizations</PaneTitle>
        <DoubleChev />
      </header>
      <div className="pl-2 text-[11px] leading-[14px] font-semibold text-[#252423]">Build visual</div>
      <div className="mt-[3px] flex gap-[37px] pl-2">
        <button aria-label="Build visual" className="flex h-8 w-8 items-center justify-center rounded-sm bg-[#d2d0ce]">
          <svg viewBox="0 0 24 26" className="h-[26px] w-6" fill="none" stroke="#252423">
            <path d="M0 2h19" strokeWidth="1.300" />
            <path d="M.500 6.500h23v7H.500zM.500 17.500h23v7H.500z" fill="#107c60" strokeDasharray="2 1.200" />
          </svg>
        </button>
        <button aria-label="Format visual">
          <svg viewBox="0 0 26 26" className="h-[26px] w-[26px]" fill="none" stroke="#252423" strokeWidth="1.200">
            <path d="M9 25H1.500V1.500H12l6 6M12 1.500V8h6" />
            <path d="M24.500 9.500L14 19l2.500 2.500z" fill="#fff" />
            <path d="M14 19c-4 0-3 4-6 5 3 2 8 1 8.500-2.500z" fill="#8a8886" />
          </svg>
        </button>
      </div>
      <svg viewBox="0 0 180 14" className="block h-3.5 w-full shrink-0" fill="none" stroke="#8a8886" preserveAspectRatio="xMinYMin slice">
        <path d="M0 12.500h16l8-7.500 8 7.500h300" />
      </svg>
      <div className="grid grid-cols-6 pt-1.5 pr-[3px] pl-1.5">
        {vizIcons.map(([name, art]) => (
          <button key={name} aria-label={name} className="flex h-7 w-7 items-center justify-center">
            <svg viewBox="0 0 18 18" className="h-[18px] w-[18px] overflow-visible" fill="none">
              {art}
            </svg>
          </button>
        ))}
      </div>
      <button aria-label="Get more visuals" className="flex h-8 items-center border-b border-[#d2d0ce] pb-1.5 pl-3">
        <svg viewBox="0 0 16 4" className="h-1 w-4" fill="#252423">
          <path d="M0 1h2v2H0zM7 1h2v2H7zM14 1h2v2h-2z" />
        </svg>
      </button>
      <div className="flex flex-col pr-1.5 pl-1 text-[11px] text-[#252423]">
        <div className="mt-2 pl-2 leading-5">Values</div>
        <div className="mt-[3px] flex h-7 items-center border border-dashed border-[#c8c6c4] bg-white pl-2.5">Add data fields here</div>
        <div className="mt-2 pl-2 leading-5 font-semibold text-[#484644]">Drill through</div>
        <label className="relative mt-[5px] flex h-5 items-center justify-between pr-4 pl-2">
          Cross-report
          <input type="checkbox" className="sr-only" />
          <span className="flex h-4 w-8 items-center gap-0.5 rounded-full border border-[#605e5c] bg-white pl-1 text-[9px] text-[#605e5c]">
            <i className="h-2 w-2 rounded-full bg-[#605e5c]" />
            Off
          </span>
        </label>
        <label className="relative mt-[7px] flex h-5 items-center justify-between pr-4 pl-2">
          Keep all filters
          <input type="checkbox" defaultChecked className="sr-only" />
          <span className="flex h-4 w-8 items-center justify-end gap-0.5 rounded-full bg-[#107c60] pr-1 text-[9px] font-semibold text-white">
            On
            <i className="h-2 w-2 rounded-full bg-white" />
          </span>
        </label>
        <div className="mt-2 flex h-[27px] items-center border border-dashed border-[#c8c6c4] bg-white pl-2 whitespace-nowrap">Add drill-through fields here</div>
      </div>
    </aside>
  );
}

const fields: [string, "s" | "c" | ""][] = [
  ["Age", "s"], ["Attrition", ""], ["Avg Performa...", "c"], ["Avg Salary Hike", "c"], ["Avg Years At ...", "c"],
  ["Avg Years In C...", "c"], ["Avg Years Sinc...", "c"], ["Avg Years Wit...", "c"], ["Avg.DailyRate", "c"], ["Avg.HourlyRate", "c"],
  ["AVg.JobSatisfa...", "c"], ["AVg.MonthlyI...", "c"], ["BusinessTravel", ""], ["Count Attrition", "c"], ["DailyRate", "s"],
  ["Department", ""], ["DistanceFrom...", "s"], ["Education", "s"], ["EducationField", ""], ["EmployeeCount", "s"],
  ["EmployeeNu...", "s"], ["EnvironmentS...", "s"], ["Gender", ""], ["HourlyRate", "s"], ["JobInvolvement", "s"],
  ["JobLevel", "s"], ["JobRole", ""], ["JobSatisfaction", "s"], ["MaritalStatus", ""], ["MonthlyIncome", "s"], ["MonthlyRate", "s"],
];

function DataPane() {
  return (
    <aside className="flex w-[179px] shrink-0 flex-col border-l border-[#e1dfdd] pb-2">
      <header className="flex h-[38px] shrink-0 items-center justify-between pr-1.5 pl-2">
        <PaneTitle>Data</PaneTitle>
        <DoubleChev />
      </header>
      <div className="mt-1.5 mr-0.5 ml-1 flex h-6 shrink-0 items-center rounded border border-[#d2d0ce] border-b-[#605e5c] bg-white pl-3">
        <svg viewBox="0 0 16 16" className="h-4 w-4" fill="none" stroke="#605e5c">
          <circle cx="6.500" cy="6.500" r="5" />
          <path d="M10 10l5 5" />
        </svg>
        <input aria-label="Search data" placeholder="Search" className="ml-1 w-28 bg-transparent text-[12px] outline-none placeholder:text-[#605e5c]" />
      </div>
      <div className="mt-2 flex min-h-0 flex-1 overflow-hidden">
        <div className="min-w-0 flex-1">
          <div className="flex h-[25px] items-center pr-0.5 pl-[13px] text-[12px] text-[#252423]">
            <Chev className="h-[7px] w-3 text-[#605e5c]" />
            <svg viewBox="0 0 14 14" className="mr-[5px] ml-[3px] h-[13px] w-[13px]" fill="none" stroke="#252423" strokeWidth="1.200">
              <rect x="1" y="1" width="12" height="12" rx="2" />
              <path d="M1 5h12M1 9h12M5 1v12M9 1v12" />
            </svg>
            <span className="flex-1">HR</span>
            <Dots />
          </div>
          {fields.map(([name, kind]) => (
            <label key={name} className="flex h-6 items-center pl-11 text-[11px] whitespace-nowrap text-[#252423]">
              <input type="checkbox" className="mr-1.5 h-3 w-3 shrink-0 appearance-none rounded-xs border border-[#8a8886]" />
              <span className="mr-1.5 w-3.5 shrink-0">
                {kind === "s" && (
                  <svg viewBox="0 0 14 14" className="h-3.5 w-3.5" fill="none" stroke="#252423" strokeWidth="1.200">
                    <path d="M12.500 3V1H2l5.500 6L2 13h10.500v-2" />
                  </svg>
                )}
                {kind === "c" && (
                  <svg viewBox="0 0 14 14" className="h-3.5 w-3.5" fill="none" stroke="#252423" strokeWidth="1.100">
                    <rect x="1.500" y=".600" width="11" height="12.800" rx="2" />
                    <path d="M4 3h6v2.500H4z" />
                    <path d="M4 8h6M4 10.500h6" strokeWidth="1.500" strokeDasharray="1.500 .75" />
                  </svg>
                )}
              </span>
              {name}
            </label>
          ))}
        </div>
        <div className="mr-[3px] h-[484px] w-2 shrink-0 bg-[#8a8886]" />
      </div>
    </aside>
  );
}

/* ---------- bottom bars ---------- */

function PageTabs() {
  return (
    <div className="flex h-[35px] shrink-0">
      <div className="w-[10px] shrink-0 border-r border-[#e1dfdd]" />
      <button aria-label="Desktop layout" className="ml-2.5 flex w-6 flex-col items-center pt-[7px]">
        <svg viewBox="0 0 20 15" className="h-[15px] w-5" fill="none" stroke="#484644" strokeWidth="1.400">
          <path d="M1 1h18v10H1zM10 11v3M6.500 14h7" />
        </svg>
        <span className="mt-1.5 h-[3px] w-6 rounded-full bg-[#107c60]" />
      </button>
      <button aria-label="Mobile layout" className="ml-[25px] pb-1.5">
        <svg viewBox="0 0 14 20" className="h-5 w-3.5" fill="none" stroke="#484644" strokeWidth="1.400">
          <rect x="1" y="1" width="12" height="18" rx="1" />
          <path d="M6 16.500h2" />
        </svg>
      </button>
      <button aria-label="Previous page" className="ml-5">
        <svg viewBox="0 0 5 8" className="h-2 w-[5px]" fill="#c8c6c4"><path d="M5 0v8L0 4z" /></svg>
      </button>
      <button aria-label="Next page" className="ml-[17px]">
        <svg viewBox="0 0 5 8" className="h-2 w-[5px]" fill="#c8c6c4"><path d="M0 0v8l5-4z" /></svg>
      </button>
      <button className="ml-[7px] w-[76px] border-b-[3px] border-l border-b-[#107c60] border-l-[#8a8886] bg-white pt-1 text-[11px] font-semibold text-[#252423]">Page 1</button>
      <button aria-label="New page" className="ml-px flex w-[39px] items-center justify-center bg-[#107c60]">
        <svg viewBox="0 0 12 12" className="h-3 w-3" stroke="#fff" strokeWidth="3"><path d="M6 0v12M0 6h12" /></svg>
      </button>
    </div>
  );
}

function StatusBar() {
  return (
    <footer className="h-[19px] shrink-0 overflow-hidden border-t border-[#d2d0ce] text-[11px] text-[#605e5c]">
      <div className="flex h-6 items-center pl-0.5">
        <span>1 of 1</span>
        <button aria-label="Zoom out" className="ml-auto font-bold">-</button>
        <input
          type="range"
          aria-label="Zoom"
          defaultValue={51}
          className="mx-1.5 h-3 w-[101px] appearance-none bg-transparent [&::-webkit-slider-runnable-track]:h-px [&::-webkit-slider-runnable-track]:bg-[#605e5c] [&::-webkit-slider-thumb]:-mt-[5px] [&::-webkit-slider-thumb]:h-[11px] [&::-webkit-slider-thumb]:w-1 [&::-webkit-slider-thumb]:appearance-none [&::-webkit-slider-thumb]:bg-[#484644]"
        />
        <button aria-label="Zoom in" className="text-[13px]">+</button>
        <span className="ml-3.5">103%</span>
        <button aria-label="Fit to page" className="ml-3">
          <svg viewBox="0 0 16 12" className="h-3 w-4" fill="none" stroke="#484644" strokeWidth="1.100">
            <path d="M.500.500h15v11H.500zM3 5V3h2.500M10.500 3H13v2M13 7v2h-2.500M5.500 9H3V7" />
          </svg>
        </button>
        <button className="ml-[14px] w-[194px] text-left whitespace-nowrap text-[#323130]">Update available (click to download)</button>
      </div>
    </footer>
  );
}

function Watermark() {
  return (
    <div className="pointer-events-none absolute bottom-6 left-[831px] z-30 flex w-[226px] flex-col items-center text-black/10" aria-hidden="true">
      <span lang="ar" dir="rtl" className="mb-2 text-[64px] leading-[64px] font-bold whitespace-nowrap font-['DejaVu_Sans',sans-serif]">مستقل</span>
      <span className="text-[35px] leading-9 font-bold whitespace-nowrap">mostaql.com</span>
    </div>
  );
}

export default function App() {
  return (
    <div className="relative flex h-screen flex-col overflow-hidden bg-[#f3f2f1] font-['Open_Sans',sans-serif]">
      <div className="flex h-[11px] shrink-0 items-start overflow-hidden bg-[#3b3a39] text-[11px] leading-3 text-white">
        <span className="-mt-1.5 ml-[71px] w-[740px]">HRMI (1) &nbsp;•&nbsp; Last saved: 6/27/2026 at 6:18 PM</span>
        <span className="h-1.5 w-[401px] shrink-0 rounded-b-sm bg-[#d2d0ce]" />
        <span className="-mt-2 ml-auto">Sign</span>
        <span className="-mt-3 mr-[147px] ml-9 h-4 w-4 rounded-full border-2 border-white" />
      </div>
      <nav className="flex h-[35px] shrink-0 bg-[#fafafa] text-[13px] text-[#252423]">
        <button className="flex w-3 shrink-0 items-center justify-end overflow-hidden pb-[3px]">File</button>
        <div className="flex gap-[33px] pl-[38px]">
          <button className="flex flex-col pt-1.5 leading-5 font-semibold">
            Home
            <span className="mt-0.5 h-[3px] w-full bg-[#107c60]" />
          </button>
          {["Insert", "Modeling", "View", "Optimize", "Help"].map((t) => (
            <button key={t} className="pb-[3px]">{t}</button>
          ))}
        </div>
        <button className="mt-1 mr-1 ml-auto flex h-6 w-[84px] items-center gap-1.5 rounded bg-[#107c60] pl-1.5 text-[11px] font-semibold text-white">
          <svg viewBox="0 0 16 16" className="h-4 w-4" fill="none" stroke="#fff" strokeWidth="1.200">
            <path d="M4 3H1v12h11v-3M10 1l5 5-5 5V8C7 8 5 9 4 11c0-4 2-7 6-7z" />
          </svg>
          <span className="ml-0.5">Share</span>
          <Chev w={1.6} className="-ml-0.5 h-1.5 w-2.5" />
        </button>
      </nav>
      <Ribbon />
      <div className="flex min-h-0 flex-1">
        <div className="flex min-w-0 flex-1 flex-col">
          <div className="flex min-h-0 flex-1">
            <div className="w-[10px] shrink-0 border-r border-[#e1dfdd]" />
            <Report />
            <Filters />
          </div>
          <PageTabs />
        </div>
        <Visualizations />
        <DataPane />
      </div>
      <StatusBar />
      <Watermark />
    </div>
  );
}
